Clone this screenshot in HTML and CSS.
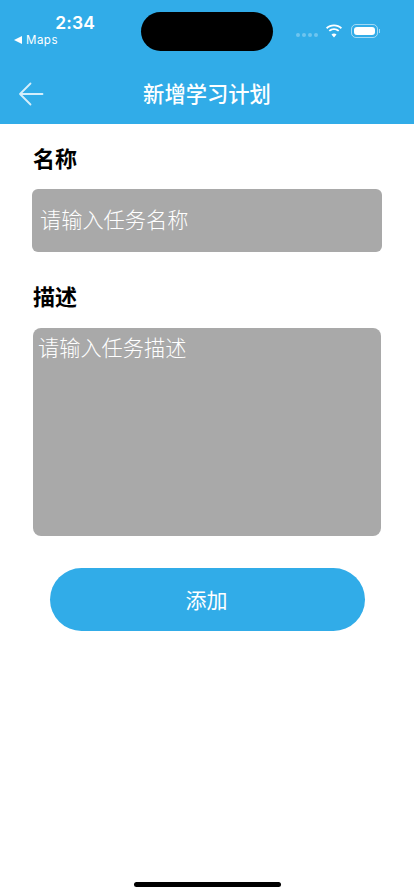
FILE: index.html
```html
<!DOCTYPE html>
<html lang="zh-CN">
<head>
<meta charset="utf-8">
<title>新增学习计划</title>
<link rel="stylesheet" href="styles.css">
</head>
<body>
<div class="screen">
  <header class="header">
    <div class="status">
      <div class="status-left">
        <span class="time">2:34</span>
        <span class="back-app"><span class="tri"></span>Maps</span>
      </div>
      <div class="island"></div>
      <div class="status-right">
        <span class="dots"><i></i><i></i><i></i><i></i></span>
        <svg class="wifi" width="18" height="14" viewBox="0 0 18 14"><path d="M9 2.200c2.600 0 5 1 6.800 2.700l1.200-1.300C14.900 1.600 12.100.4 9 .4S3.100 1.600 1 3.600l1.200 1.300C4 3.200 6.400 2.200 9 2.200z" fill="#fff"/><path d="M9 6c1.600 0 3 .6 4.100 1.600l1.200-1.300C12.900 5 11 4.200 9 4.200S5.100 5 3.700 6.300l1.200 1.300C6 6.600 7.400 6 9 6z" fill="#fff"/><path d="M9 9.600c-1 0-1.800.4-2.500 1L9 13.400l2.500-2.800c-.7-.6-1.500-1-2.500-1z" fill="#fff"/></svg>
        <span class="battery"><span class="battery-fill"></span></span>
        <span class="nub"></span>
      </div>
    </div>
    <nav class="nav">
      <svg class="back" width="26" height="24" viewBox="0 0 26 24"><path d="M12.500 1.500 2 12l10.500 10.500M2 12h22.500" fill="none" stroke="#d5eefb" stroke-width="1.800" stroke-linecap="round" stroke-linejoin="round"/></svg>
      <h1 class="title">新增学习计划</h1>
    </nav>
  </header>
  <main class="form">
    <label class="label">名称</label>
    <div class="field field-name">请输入任务名称</div>
    <label class="label label-desc">描述</label>
    <div class="field field-desc">请输入任务描述</div>
    <button class="add" type="button">添加</button>
  </main>
  <div class="home"></div>
</div>
</body>
</html>
```
FILE: styles.css
```css
* { box-sizing: border-box; }
html, body { margin: 0; padding: 0; background: #fff; }
body { font-family: "Noto Sans CJK SC", "Liberation Sans", sans-serif; }
.screen { position: relative; width: 414px; height: 896px; overflow: hidden; background: #fff; }
.header { height: 124px; background: #31ace8; color: #fff; display: flex; flex-direction: column; }
.status { position: relative; height: 62px; display: flex; justify-content: space-between; }
.status-left { width: 96px; padding: 13px 0 0 14px; display: flex; flex-direction: column; font-family: Inter, "Liberation Sans", sans-serif; }
.time { font-size: 17.500px; font-weight: 600; line-height: 20px; text-align: right; padding-right: 1px; letter-spacing: .1px; }
.back-app { font-size: 11.500px; line-height: 14px; margin-top: 0; display: flex; align-items: center; gap: 4px; letter-spacing: .5px; }
.tri { width: 0; height: 0; border-style: solid; border-width: 4px 8px 4px 0; border-color: transparent #fff transparent transparent; }
.island { position: absolute; left: 141px; top: 12px; width: 132px; height: 39px; border-radius: 20px; background: #000; }
.status-right { display: flex; align-items: flex-start; padding: 23px 34px 0 0; }
.dots { display: flex; gap: 2px; margin: 10px 7px 0 0; }
.dots i { width: 4px; height: 4px; border-radius: 50%; background: rgba(255,255,255,.3); }
.wifi { margin: 1px 8px 0 0; }
.battery { width: 27px; height: 14px; margin-top: 1px; padding: 2px; border: 1px solid rgba(255,255,255,.55); border-radius: 5px; display: flex; }
.battery-fill { flex: 1; background: #fff; border-radius: 3px; }
.nub { width: 1px; height: 4px; margin: 6px 0 0 1px; background: rgba(255,255,255,.55); }
.nav { position: relative; height: 62px; display: flex; align-items: center; justify-content: center; }
.back { position: absolute; left: 18px; top: 20px; }
.title { margin: 0; font-size: 21.300px; font-weight: 500; line-height: 28px; }
.form { display: flex; flex-direction: column; padding: 17px 32px 0; }
.label { font-size: 22px; font-weight: 700; line-height: 32px; color: #000; padding-left: 1px; }
.label-desc { margin-top: 27px; }
.field { background: #a9a9a9; color: #fff; font-size: 21.200px; font-weight: 300; line-height: 30px; }
.field-name { margin-top: 16px; width: 350px; height: 63px; border-radius: 6px; padding: 15px 8px; }
.field-desc { margin: 17px 1px 0; width: 348px; height: 208px; border-radius: 8px; padding: 4px 5px; }
.add { margin: 32px 0 0 18px; width: 315px; height: 63px; border: 0; border-radius: 32px; background: #31ace8; color: #fff; font: inherit; font-size: 21px; font-weight: 400; padding: 0 2px 1px 0; }
.home { position: absolute; left: 134px; top: 882px; width: 147px; height: 5px; border-radius: 3px; background: #000; }
```
